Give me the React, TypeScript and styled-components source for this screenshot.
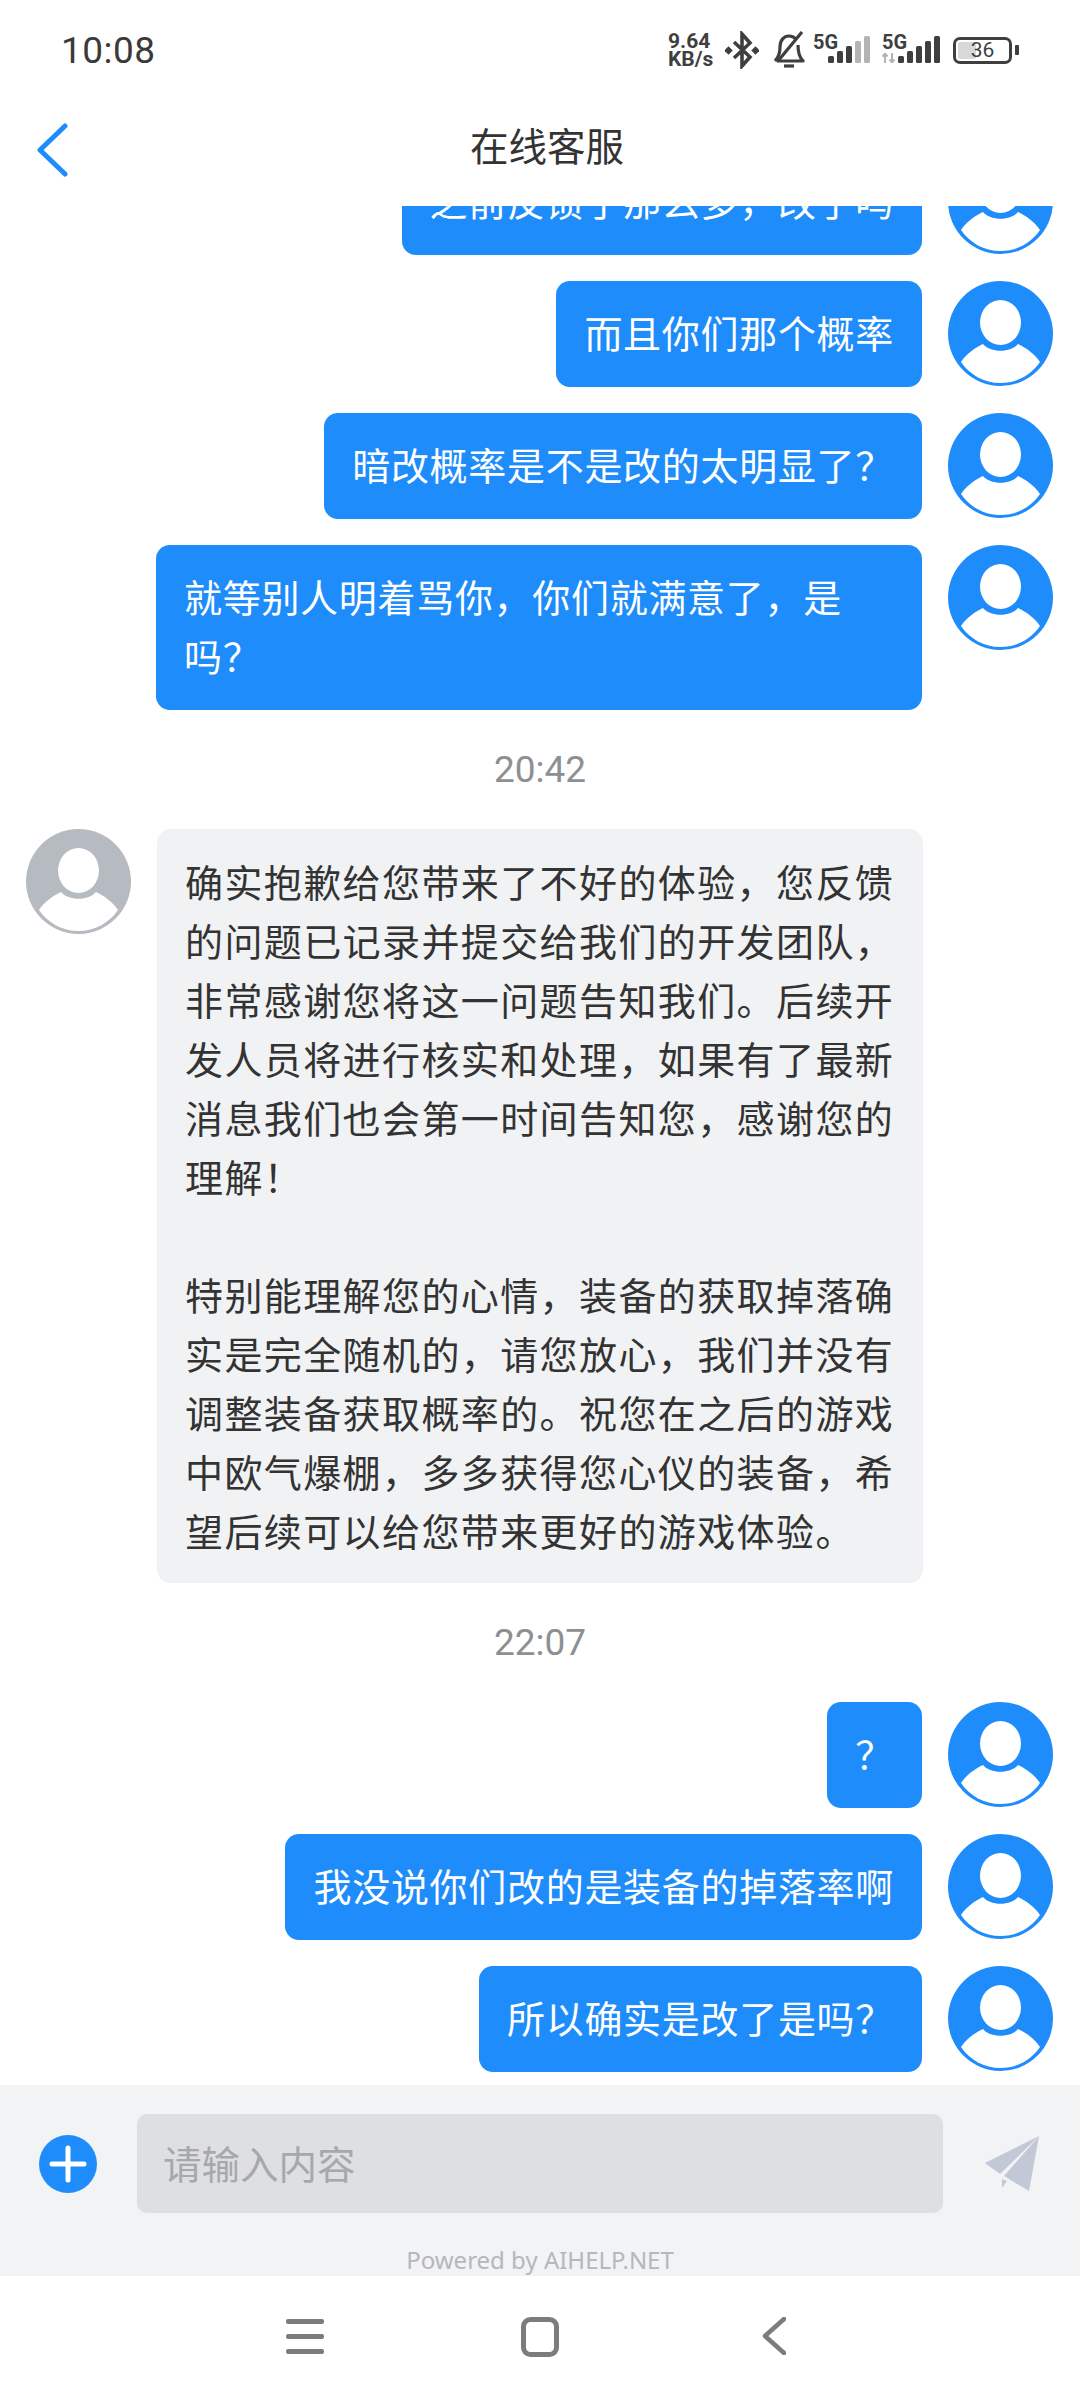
import React from 'react';
import styled, { createGlobalStyle } from 'styled-components';

const GlobalStyle = createGlobalStyle`
  html, body {
    margin: 0;
    padding: 0;
    background: #fff;
  }
  * {
    box-sizing: border-box;
  }
`;

const cjk = `"Noto Sans CJK SC", "Noto Sans", sans-serif`;

const Screen = styled.div`
  width: 1080px;
  height: 2400px;
  display: flex;
  flex-direction: column;
  background: #fff;
  font-family: ${cjk};
  overflow: hidden;
`;

const StatusBar = styled.div`
  height: 100px;
  flex: none;
  display: flex;
  align-items: center;
  justify-content: space-between;
  padding: 0 61px;
  color: #3a3a3a;
`;

const Clock = styled.div`
  font-family: Roboto, sans-serif;
  font-size: 37px;
  letter-spacing: 0.5px;
`;

const StatusIcons = styled.div`
  display: flex;
  align-items: center;
`;

const NetSpeed = styled.div`
  font-family: Roboto, sans-serif;
  font-weight: 700;
  font-size: 21px;
  line-height: 18px;
  color: #3f3f3f;
  width: 57px;
`;

const StatusSvg = styled.svg<{ $left?: number }>`
  display: block;
  flex: none;
  margin-left: ${(p) => p.$left ?? 0}px;
`;

const NetworkBox = styled.div<{ $left: number; $width: number }>`
  position: relative;
  width: ${(p) => p.$width}px;
  height: 30px;
  margin-left: ${(p) => p.$left}px;
  padding-bottom: 2px;
  display: flex;
  justify-content: flex-end;
  align-items: flex-end;
`;

const NetworkLabel = styled.span`
  position: absolute;
  left: 0;
  top: -3px;
  font-family: Roboto, sans-serif;
  font-weight: 700;
  font-size: 20px;
  line-height: 20px;
  color: #3f3f3f;
`;

const ArrowsSvg = styled.svg`
  position: absolute;
  left: 0;
  bottom: 2px;
`;

const BatteryWrap = styled.div`
  display: flex;
  align-items: center;
  margin-left: 13px;
`;

const BatteryBody = styled.div`
  width: 59px;
  height: 27px;
  border: 3px solid #3f3f3f;
  border-radius: 7px;
  padding: 2px;
  position: relative;
  display: flex;
`;

const BatteryFill = styled.div`
  width: 36%;
  background: #d8d8d8;
  border-radius: 2px;
`;

const BatteryLabel = styled.span`
  position: absolute;
  inset: 0;
  display: flex;
  align-items: center;
  justify-content: center;
  font-family: Roboto, sans-serif;
  font-size: 21px;
  color: #3f3f3f;
`;

const BatteryNub = styled.div`
  width: 4px;
  height: 10px;
  margin-left: 3px;
  background: #3f3f3f;
  border-radius: 1px;
`;

const Header = styled.div`
  height: 106px;
  flex: none;
  display: flex;
  align-items: center;
  position: relative;
  padding: 0 0 6px 36px;
`;

const Title = styled.div`
  position: absolute;
  left: 0;
  right: 0;
  top: 19px;
  padding-left: 14px;
  text-align: center;
  font-size: 38.5px;
  line-height: 50px;
  color: #333;
`;

const MessageList = styled.div`
  height: 1879px;
  flex: none;
  display: flex;
  flex-direction: column;
  justify-content: flex-end;
  overflow: hidden;
  padding-bottom: 13px;
`;

const Row = styled.div<{ $mine?: boolean }>`
  flex: none;
  display: flex;
  justify-content: ${(p) => (p.$mine ? 'flex-end' : 'flex-start')};
  align-items: flex-start;
  gap: 26px;
  padding: 0 27px 0 26px;
  margin-top: 26px;
`;

const Bubble = styled.div<{ $mine?: boolean }>`
  max-width: 766px;
  padding: 21px 28px 26px;
  border-radius: 14px;
  background: ${(p) => (p.$mine ? '#1e8cfa' : '#f1f2f4')};
  color: ${(p) => (p.$mine ? '#fff' : '#333')};
  font-size: 38px;
  line-height: 59px;
  letter-spacing: 0.7px;
  white-space: pre-wrap;
`;

const BotBubble = styled(Bubble)`
  width: 766px;
  padding: 22px 26px 24px 28px;
  letter-spacing: 1.4px;
`;

const TimeLabel = styled.div`
  flex: none;
  text-align: center;
  font-family: Roboto, sans-serif;
  font-size: 37px;
  line-height: 42px;
  color: #8d9093;
  margin: 39px 0 12px;
`;

const Footer = styled.div`
  height: 191px;
  flex: none;
  background: #f1f3f5;
  display: flex;
  flex-direction: column;
  padding-top: 29px;
`;

const InputRow = styled.div`
  display: flex;
  align-items: center;
  padding: 0 41px 0 39px;
`;

const InputBox = styled.div`
  width: 807px;
  height: 99px;
  margin: 0 42px 0 40px;
  padding: 0 0 4px 26px;
  background: #dddfe1;
  border-radius: 10px;
  display: flex;
  align-items: center;
  font-size: 38.5px;
  color: #a6a8ab;
`;

const Powered = styled.div`
  margin-top: 32px;
  text-align: center;
  font-family: "Noto Sans", sans-serif;
  font-size: 24px;
  line-height: 30px;
  color: #b5b7ba;
`;

const NavBar = styled.div`
  flex: 1;
  display: flex;
  align-items: flex-start;
  justify-content: center;
  gap: 197px;
  padding: 41px 8px 0 0;
`;

const NavIcon = styled.svg<{ $left?: number }>`
  flex: none;
  display: block;
  margin-left: ${(p) => p.$left ?? 0}px;
`;

const AvatarSvg = styled.svg`
  flex: none;
  display: block;
`;

const FooterIcon = styled.svg`
  flex: none;
  display: block;
`;

const Avatar = ({ color }: { color: string }) => (
  <AvatarSvg width="105" height="105" viewBox="0 0 105 105">
    <circle cx="52.5" cy="52.5" r="52.5" fill={color} />
    <ellipse cx="52.5" cy="41.5" rx="20.5" ry="22.5" fill="#fff" />
    <path
      d="M13 81 C 19 72 27 67 35 63 C 42 72 63 72 70 63 C 78 67 86 72 92 81 C 83 94 69 102 52.5 102 C 36 102 22 94 13 81 Z"
      fill="#fff"
    />
  </AvatarSvg>
);

const Bars = ({ active }: { active: number }) => (
  <StatusSvg width="42" height="27" viewBox="0 0 42 27">
    {[0, 1, 2, 3, 4].map((i) => (
      <rect
        key={i}
        x={i * 9}
        y={20 - i * 5}
        width="6"
        height={7 + i * 5}
        rx="1.5"
        fill={i < active ? '#3f3f3f' : '#b4b4b4'}
      />
    ))}
  </StatusSvg>
);

const NetworkSlot = ({ active, left, width, arrows }: { active: number; left: number; width: number; arrows?: boolean }) => (
  <NetworkBox $left={left} $width={width}>
    <NetworkLabel>5G</NetworkLabel>
    {arrows && (
      <ArrowsSvg width="13" height="10" viewBox="0 0 13 10">
        <path d="M3 10 V2 M0.5 3.5 L3 0.5 L5.5 3.5 M10 0 V8 M7.5 6.5 L10 9.5 L12.5 6.5" stroke="#b4b4b4" strokeWidth="2" fill="none" />
      </ArrowsSvg>
    )}
    <Bars active={active} />
  </NetworkBox>
);

const mine = '#1e8cfa';
const botText =
  '确实抱歉给您带来了不好的体验，您反馈的问题已记录并提交给我们的开发团队，非常感谢您将这一问题告知我们。后续开发人员将进行核实和处理，如果有了最新消息我们也会第一时间告知您，感谢您的理解！\n\n特别能理解您的心情，装备的获取掉落确实是完全随机的，请您放心，我们并没有调整装备获取概率的。祝您在之后的游戏中欧气爆棚，多多获得您心仪的装备，希望后续可以给您带来更好的游戏体验。';

export default function App() {
  return (
    <Screen>
      <GlobalStyle />
      <StatusBar>
        <Clock>10:08</Clock>
        <StatusIcons>
          <NetSpeed>
            9.64
            <br />
            KB/s
          </NetSpeed>
          <StatusSvg width="34" height="38" viewBox="0 0 34 38" fill="none" stroke="#3f3f3f" strokeWidth="3.6">
            <path d="M9 11 L25 26 L17 35 V3 L25 12 L9 27" />
            <rect x="0.5" y="16.5" width="6" height="6" fill="#3f3f3f" stroke="none" transform="rotate(45 3.5 19.5)" />
            <rect x="27.5" y="16.5" width="6" height="6" fill="#3f3f3f" stroke="none" transform="rotate(45 30.5 19.5)" />
          </StatusSvg>
          <StatusSvg width="32" height="38" viewBox="0 0 32 38" fill="none" stroke="#3f3f3f" strokeWidth="3.2" $left={14}>
            <path d="M2 30 C 6 26 7 22 7 16 C 7 9 11 5 16 5 C 19 5 21 6 23 8 M25 14 C 25 22 26 26 30 30 H 4" strokeLinejoin="round" />
            <path d="M29 1 L5 30" />
            <path d="M11 35 H 21" />
          </StatusSvg>
          <NetworkSlot active={3} left={8} width={57} />
          <NetworkSlot active={5} left={12} width={58} arrows />
          <BatteryWrap>
            <BatteryBody>
              <BatteryFill />
              <BatteryLabel>36</BatteryLabel>
            </BatteryBody>
            <BatteryNub />
          </BatteryWrap>
        </StatusIcons>
      </StatusBar>
      <Header>
        <svg width="32" height="54" viewBox="0 0 32 54" fill="none">
          <path d="M29 3 L4 27 L29 51" stroke={mine} strokeWidth="5" strokeLinecap="round" strokeLinejoin="round" />
        </svg>
        <Title>在线客服</Title>
      </Header>
      <MessageList>
        <Row $mine>
          <Bubble $mine>之前反馈了那么多，改了吗</Bubble>
          <Avatar color={mine} />
        </Row>
        <Row $mine>
          <Bubble $mine>而且你们那个概率</Bubble>
          <Avatar color={mine} />
        </Row>
        <Row $mine>
          <Bubble $mine>暗改概率是不是改的太明显了？</Bubble>
          <Avatar color={mine} />
        </Row>
        <Row $mine>
          <Bubble $mine>就等别人明着骂你，你们就满意了，是吗？</Bubble>
          <Avatar color={mine} />
        </Row>
        <TimeLabel>20:42</TimeLabel>
        <Row>
          <Avatar color="#b6bac1" />
          <BotBubble>{botText}</BotBubble>
        </Row>
        <TimeLabel>22:07</TimeLabel>
        <Row $mine>
          <Bubble $mine>？</Bubble>
          <Avatar color={mine} />
        </Row>
        <Row $mine>
          <Bubble $mine>我没说你们改的是装备的掉落率啊</Bubble>
          <Avatar color={mine} />
        </Row>
        <Row $mine>
          <Bubble $mine>所以确实是改了是吗？</Bubble>
          <Avatar color={mine} />
        </Row>
      </MessageList>
      <Footer>
        <InputRow>
          <FooterIcon width="58" height="58" viewBox="0 0 58 58">
            <circle cx="29" cy="29" r="29" fill={mine} />
            <path d="M29 13 V45 M13 29 H45" stroke="#fff" strokeWidth="5" strokeLinecap="round" />
          </FooterIcon>
          <InputBox>请输入内容</InputBox>
          <FooterIcon width="54" height="55" viewBox="0 0 54 55">
            <path d="M54 0 L0 27 L15 38 Z" fill="#c3c8d6" />
            <path d="M54 0 L19 40 L44 55 Z" fill="#c3c8d6" />
            <path d="M17 43 L22 45 L17 52 Z" fill="#c3c8d6" />
          </FooterIcon>
        </InputRow>
        <Powered>Powered by AIHELP.NET</Powered>
      </Footer>
      <NavBar>
        <NavIcon width="38" height="38" viewBox="0 0 38 38" fill="#7c7c7c">
          <rect x="0" y="2" width="38" height="5" rx="2" />
          <rect x="0" y="17" width="38" height="5" rx="2" />
          <rect x="0" y="32" width="38" height="5" rx="2" />
        </NavIcon>
        <NavIcon width="38" height="40" viewBox="0 0 38 40" fill="none">
          <rect x="2.5" y="2.5" width="33" height="35" rx="7" stroke="#7c7c7c" strokeWidth="5" />
        </NavIcon>
        <NavIcon width="24" height="38" viewBox="0 0 24 38" fill="none" $left={6}>
          <path d="M22 2 L3 19 L22 36" stroke="#7c7c7c" strokeWidth="4.5" strokeLinecap="round" strokeLinejoin="round" />
        </NavIcon>
      </NavBar>
    </Screen>
  );
}
